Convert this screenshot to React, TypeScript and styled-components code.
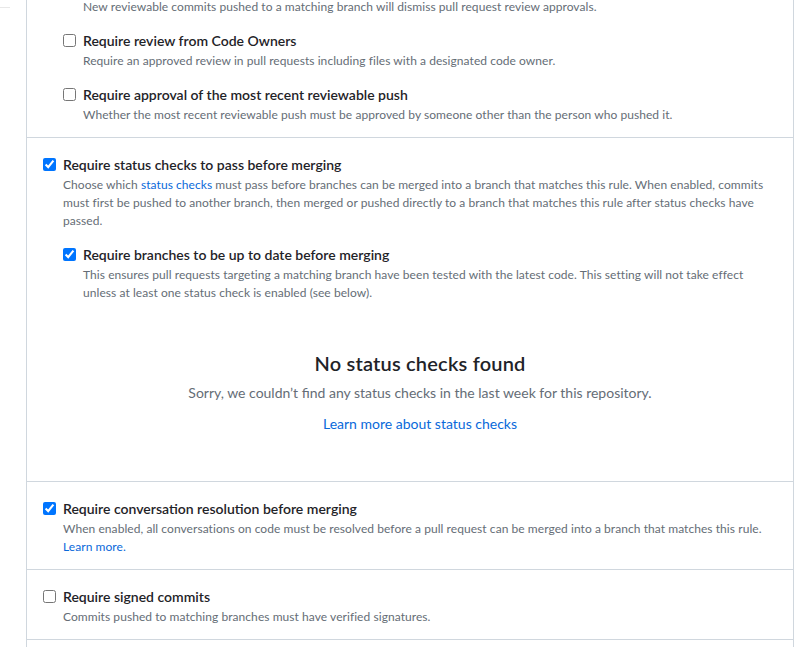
import React from "react";
import styled, { createGlobalStyle } from "styled-components";

const GlobalStyle = createGlobalStyle`
  html, body {
    margin: 0;
    padding: 0;
    background: #ffffff;
  }
  body {
    font-family: Lato, "Segoe UI", sans-serif;
    color: #1f2328;
    overflow: hidden;
  }
`;

const Page = styled.div`
  display: flex;
  align-items: stretch;
  min-height: 647px;
  width: 807px;
`;

const Sidebar = styled.div`
  width: 26px;
  flex: 0 0 26px;
  padding-top: 7px;
  box-sizing: border-box;
`;

const SidebarRule = styled.div`
  width: 10px;
  height: 1px;
  background: #e8e8e8;
`;

const Panel = styled.div`
  width: 768px;
  flex: 0 0 768px;
  box-sizing: border-box;
  border-left: 1px solid #d0d7de;
  border-right: 1px solid #d0d7de;
  overflow: hidden;
`;

const ScrolledContent = styled.div`
  margin-top: -40px;
`;

const Section = styled.div`
  padding: 16px 16px 13px;
  border-bottom: 1px solid #d0d7de;
`;

const Item = styled.div<{ $nested?: boolean }>`
  display: grid;
  grid-template-columns: 20px 1fr;
  margin-left: ${(p) => (p.$nested ? "20px" : "0")};
  & + & {
    margin-top: 14px;
  }
`;

const Box = styled.input`
  width: 13px;
  height: 13px;
  margin: 0;
  align-self: center;
  grid-column: 1;
  grid-row: 1;
`;

const Title = styled.label`
  grid-column: 2;
  grid-row: 1;
  font-size: 14px;
  line-height: 21px;
  font-weight: 600;
  color: #1f2328;
`;

const Note = styled.p`
  grid-column: 2;
  margin: 1px 0 0;
  font-size: 12px;
  line-height: 18px;
  letter-spacing: 0.06px;
  color: #656d76;
  & + & {
    margin-top: 0;
  }
`;

const Link = styled.a`
  color: #0969da;
  text-decoration: none;
`;

const Nested = styled.div`
  grid-column: 1 / span 2;
  margin-top: 14px;
`;

const Blankslate = styled.div`
  grid-column: 2;
  padding: 46px 0 34px;
  text-align: center;
`;

const BlankTitle = styled.h3`
  margin: 0;
  font-size: 20px;
  line-height: 30px;
  font-weight: 600;
  letter-spacing: 0.2px;
  color: #1f2328;
`;

const BlankText = styled.p`
  margin: 4px 0 10px;
  font-size: 14px;
  line-height: 21px;
  color: #656d76;
`;

const BlankLink = styled.a`
  display: block;
  font-size: 14px;
  line-height: 21px;
  color: #0969da;
  text-decoration: none;
`;

type RuleProps = {
  title: string;
  checked?: boolean;
  nested?: boolean;
  children?: React.ReactNode;
};

function Rule({ title, checked, nested, children }: RuleProps) {
  return (
    <Item $nested={nested}>
      <Box type="checkbox" defaultChecked={checked} />
      <Title>{title}</Title>
      {children}
    </Item>
  );
}

export default function App() {
  return (
    <>
      <GlobalStyle />
      <Page>
        <Sidebar>
          <SidebarRule />
        </Sidebar>
        <Panel>
          <ScrolledContent>
            <Section>
              <Rule nested title="Dismiss stale pull request approvals when new commits are pushed">
                <Note>New reviewable commits pushed to a matching branch will dismiss pull request review approvals.</Note>
              </Rule>
              <Rule nested title="Require review from Code Owners">
                <Note>Require an approved review in pull requests including files with a designated code owner.</Note>
              </Rule>
              <Rule nested title="Require approval of the most recent reviewable push">
                <Note>Whether the most recent reviewable push must be approved by someone other than the person who pushed it.</Note>
              </Rule>
            </Section>
            <Section>
              <Rule checked title="Require status checks to pass before merging">
                <Note>
                  Choose which <Link href="#">status checks</Link> must pass before branches can be merged into a branch that matches this rule. When enabled, commits must first be pushed to another branch, then merged or pushed directly to a branch that matches this rule after status checks have passed.
                </Note>
                <Nested>
                  <Rule nested checked title="Require branches to be up to date before merging">
                    <Note>This ensures pull requests targeting a matching branch have been tested with the latest code. This setting will not take effect unless at least one status check is enabled (see below).</Note>
                  </Rule>
                </Nested>
                <Blankslate>
                  <BlankTitle>No status checks found</BlankTitle>
                  <BlankText>Sorry, we couldn’t find any status checks in the last week for this repository.</BlankText>
                  <BlankLink href="#">Learn more about status checks</BlankLink>
                </Blankslate>
              </Rule>
            </Section>
            <Section>
              <Rule checked title="Require conversation resolution before merging">
                <Note>When enabled, all conversations on code must be resolved before a pull request can be merged into a branch that matches this rule.</Note>
                <Note>
                  <Link href="#">Learn more.</Link>
                </Note>
              </Rule>
            </Section>
            <Section>
              <Rule title="Require signed commits">
                <Note>Commits pushed to matching branches must have verified signatures.</Note>
              </Rule>
            </Section>
            <Section>
              <Rule title="Require linear history">
                <Note>Prevent merge commits from being pushed to matching branches.</Note>
              </Rule>
            </Section>
          </ScrolledContent>
        </Panel>
      </Page>
    </>
  );
}
